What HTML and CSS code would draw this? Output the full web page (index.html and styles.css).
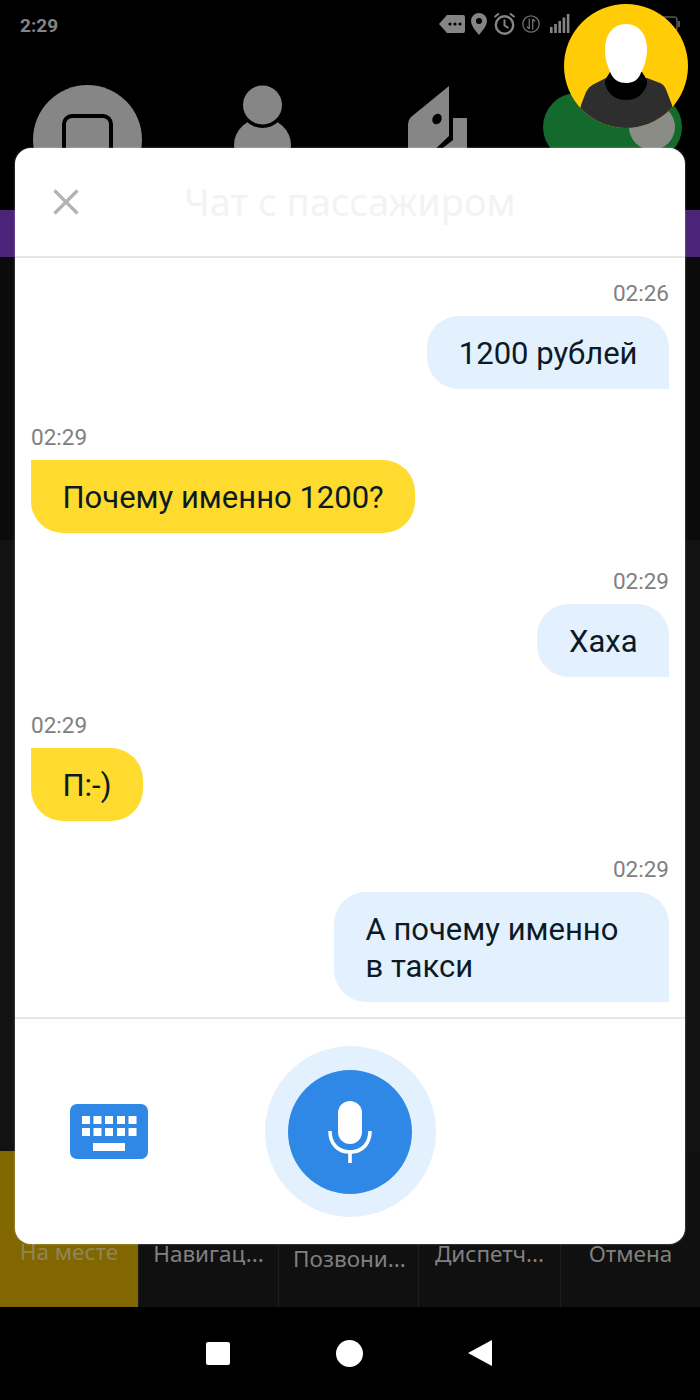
FILE: index.html
```html
<!DOCTYPE html>
<html lang="ru">
<head>
  <meta charset="UTF-8" />
  <meta name="viewport" content="width=device-width, initial-scale=1.0"/>
  <title>Чат с пассажиром</title>
  <link rel="stylesheet" href="styles.css">
</head>
<body>
  <div class="screen">
    <div class="status">
      <span class="clock">2:29</span>
      <div class="status-icons">
        <svg width="26" height="18" viewBox="0 0 26 18"><path d="M8 0H24a2 2 0 0 1 2 2V16a2 2 0 0 1-2 2H8L0 9z" fill="#858585"/><circle cx="11" cy="9" r="1.6" fill="#000"/><circle cx="16" cy="9" r="1.6" fill="#000"/><circle cx="21" cy="9" r="1.6" fill="#000"/></svg>
        <svg width="16" height="22" viewBox="0 0 16 22"><path fill-rule="evenodd" d="M8 0a8 8 0 0 1 8 8c0 5-5 10-8 14C5 18 0 13 0 8a8 8 0 0 1 8-8zm0 5a3 3 0 1 0 0 6 3 3 0 0 0 0-6z" fill="#858585"/></svg>
        <svg width="23" height="23" viewBox="0 0 23 23" fill="none" stroke="#858585"><circle cx="11.5" cy="13" r="8.7" stroke-width="2.4"/><path d="M11.5 7.5V13.5L15.500 16" stroke-width="2"/><path d="M1.500 5L6 1.500M21.500 5L17 1.500" stroke-width="2"/></svg>
        <svg width="18" height="18" viewBox="0 0 18 18" fill="none" stroke="#6f6f6f" stroke-width="1.300"><circle cx="9" cy="9" r="8.200"/><path d="M7.300 3.500V14M7.300 14L5 11.500M10.700 14.500V4M10.700 4L13 6.500"/></svg>
        <svg class="signal" width="20" height="19" viewBox="0 0 20 19" fill="#858585"><rect x="0" y="13" width="2.600" height="6"/><rect x="4.200" y="10" width="2.600" height="9"/><rect x="8.400" y="7" width="2.600" height="12"/><rect x="12.600" y="3.500" width="2.600" height="15.500"/><rect x="16.800" y="0" width="2.600" height="19"/></svg>
        <svg class="battery" width="17" height="16" viewBox="0 0 17 16" fill="none" stroke="#555"><rect x="-8" y="1" width="22" height="14" rx="3" stroke-width="1.500"/><path d="M16 5V11" stroke-width="2"/></svg>
      </div>
    </div>

    <div class="actions">
      <svg width="109" height="109" viewBox="0 0 109 109">
        <circle cx="54.500" cy="54.500" r="54.500" fill="#868686"/>
        <rect x="31" y="31" width="47" height="60" rx="8" fill="none" stroke="#000" stroke-width="4"/>
      </svg>
      <svg width="57" height="70" viewBox="0 0 57 70">
        <ellipse cx="28.500" cy="60" rx="28.500" ry="27" fill="#868686"/>
        <circle cx="28.500" cy="20" r="23" fill="#000"/>
        <circle cx="28.500" cy="20" r="19.500" fill="#868686"/>
      </svg>
      <svg width="59" height="70" viewBox="0 0 59 70">
        <path d="M41 1L3 32Q0 35 0 39V70H21L41 51z" fill="#868686"/>
        <path d="M45 33H59V70H26L45 55z" fill="#868686"/>
        <ellipse cx="29" cy="34" rx="4.500" ry="5.500" transform="rotate(25 29 34)" fill="#000"/>
      </svg>
      <svg class="toggle" width="139" height="68" viewBox="0 0 139 68">
        <rect width="139" height="68" rx="34" fill="#146a2c"/>
        <circle cx="109" cy="34" r="23" fill="#8c8c86"/>
      </svg>
    </div>

    <div class="band"></div>
    <div class="dark dark-top"></div>
    <div class="dark dark-bottom"></div>

    <div class="tabs">
      <div class="tab tab-active">На месте</div>
      <div class="tab">Навигац...</div>
      <div class="tab tab-low">Позвони...</div>
      <div class="tab">Диспетч...</div>
      <div class="tab">Отмена</div>
    </div>

    <div class="navbar">
      <span class="nav-square"></span>
      <span class="nav-circle"></span>
      <span class="nav-back"></span>
    </div>

    <svg class="avatar" width="124" height="124" viewBox="0 0 124 124">
      <clipPath id="avatar-clip"><circle cx="62" cy="62" r="62"/></clipPath>
      <g clip-path="url(#avatar-clip)">
        <rect width="124" height="124" fill="#ffcc05"/>
        <path d="M12 124L17 101L22 88Q25 82 32 79L42 74H83L96 79Q101 81 103 88L108 101L112 124z" fill="#2e2e2e"/>
        <path d="M41 76L46 68H78L83 76V80Q78 96 62 96Q46 96 41 80z" fill="#000"/>
        <path d="M62 20C76 20 84 32 83 48C82 60 78 66 76 71C73 77 68 79 62 79C55 79 50 76 47 70C45 64 41 58 41 46C41 32 48 20 62 20z" fill="#fff"/>
      </g>
    </svg>

    <div class="modal">
      <div class="modal-head">
        <svg class="close" width="26" height="26" viewBox="0 0 26 26"><path d="M1.500 1.500L24.500 24.500M24.500 1.500L1.500 24.500" stroke="#b3b3b3" stroke-width="3.200" fill="none"/></svg>
        <h1>Чат с пассажиром</h1>
      </div>

      <div class="messages">
        <div class="msg msg-out">
          <div class="time">02:26</div>
          <div class="bubble">1200 рублей</div>
        </div>
        <div class="msg msg-in">
          <div class="time">02:29</div>
          <div class="bubble">Почему именно 1200?</div>
        </div>
        <div class="msg msg-out">
          <div class="time">02:29</div>
          <div class="bubble">Хаха</div>
        </div>
        <div class="msg msg-in">
          <div class="time">02:29</div>
          <div class="bubble">П:-)</div>
        </div>
        <div class="msg msg-out">
          <div class="time">02:29</div>
          <div class="bubble bubble-wide">А почему именно<br>в такси</div>
        </div>
      </div>

      <div class="modal-foot">
        <svg class="keyboard" width="78" height="55" viewBox="0 0 78 55">
          <rect width="78" height="55" rx="7" fill="#2f88e6"/>
          <g fill="#fff">
            <rect x="12" y="12" width="8" height="8"/><rect x="23.500" y="12" width="8" height="8"/><rect x="35" y="12" width="8" height="8"/><rect x="47" y="12" width="8" height="8"/><rect x="58.500" y="12" width="8" height="8"/>
            <rect x="12" y="24" width="8" height="8"/><rect x="23.500" y="24" width="8" height="8"/><rect x="35" y="24" width="8" height="8"/><rect x="47" y="24" width="8" height="8"/><rect x="58.500" y="24" width="8" height="8"/>
            <rect x="23" y="39" width="32" height="8"/>
          </g>
        </svg>
        <div class="mic-ring">
          <div class="mic">
            <svg width="44" height="64" viewBox="0 0 44 64" fill="none">
              <rect x="10" y="1" width="24" height="43" rx="12" fill="#fff"/>
              <path d="M2 31C2 44 10 52 22 52C34 52 42 44 42 31" stroke="#fff" stroke-width="3.600"/>
              <path d="M22 52V63" stroke="#fff" stroke-width="3.600"/>
            </svg>
          </div>
        </div>
      </div>
    </div>
  </div>
</body>
</html>
```

FILE: styles.css
```css
html, body {
  margin: 0;
  padding: 0;
  background: #000;
}
.screen {
  position: relative;
  width: 700px;
  height: 1400px;
  overflow: hidden;
  display: flex;
  flex-direction: column;
  background: #000;
  font-family: "Roboto", sans-serif;
}

/* status bar */
.status {
  height: 48px;
  flex: none;
  display: flex;
  align-items: center;
  justify-content: space-between;
  padding: 0 20px;
  box-sizing: border-box;
}
.clock {
  font-size: 19px;
  font-weight: 700;
  color: #858585;
  margin-top: 2px;
}
.status-icons {
  display: flex;
  align-items: center;
  gap: 6px;
  margin-top: -1px;
}
.signal { margin-left: 4px; }
.battery { margin-left: 87px; }

/* what is behind the dialog */
.actions {
  height: 162px;
  flex: none;
  display: grid;
  grid-template-columns: repeat(4, 175px);
  justify-items: center;
  align-items: start;
  padding-top: 37px;
  box-sizing: border-box;
  overflow: hidden;
}
.toggle { margin-top: 8px; }
.band {
  height: 47px;
  flex: none;
  background: #4b2378;
}
.dark { flex: none; }
.dark-top {
  height: 283px;
  background: #0b0b0b;
}
.dark-bottom {
  height: 611px;
  background: #121212;
}
.tabs {
  height: 156px;
  flex: none;
  display: grid;
  grid-template-columns: 138px 140px 140px 142px 140px;
  background: #101010;
  font-family: "Noto Sans", sans-serif;
  font-size: 22.500px;
  color: #808080;
}
.tab {
  padding-top: 87px;
  text-align: center;
  border-left: 1px solid #1e1e1e;
  white-space: nowrap;
}
.tab-low { padding: 92px 0 0 2px; }
.tab-active {
  background: #826700;
  color: #8f8658;
  border-left: 0;
  padding-top: 85px;
}
.navbar {
  flex: 1;
  display: flex;
  align-items: center;
  justify-content: center;
  gap: 106px;
  padding: 0 2px 1px 0;
}
.nav-square {
  width: 24px;
  height: 23px;
  background: #fff;
  border-radius: 2px;
}
.nav-circle {
  width: 27px;
  height: 27px;
  background: #fff;
  border-radius: 50%;
}
.nav-back {
  width: 0;
  height: 0;
  margin-left: -1px;
  border-top: 13.5px solid transparent;
  border-bottom: 13.5px solid transparent;
  border-right: 24px solid #fff;
}

.avatar {
  position: absolute;
  top: 4px;
  left: 564px;
  z-index: 2;
}

/* chat dialog */
.modal {
  position: absolute;
  top: 148px;
  left: 15px;
  width: 670px;
  height: 1096px;
  display: flex;
  flex-direction: column;
  background: #fff;
  border-radius: 16px;
  box-shadow: 0 0 2px rgba(255,255,255,0.5);
}
.modal-head {
  height: 110px;
  flex: none;
  display: flex;
  align-items: center;
  justify-content: center;
  position: relative;
  border-bottom: 2px solid #e6e6e6;
  box-sizing: border-box;
}
.close {
  position: absolute;
  left: 38px;
  top: 41px;
}
.modal-head h1 {
  margin: 0 0 2px;
  font-family: "Noto Sans", sans-serif;
  font-size: 38px;
  font-weight: 400;
  color: #f3f3f3;
}
.messages {
  flex: 1;
  display: flex;
  flex-direction: column;
  gap: 35px;
  padding: 22px 16px 15px;
}
.msg {
  display: flex;
  flex-direction: column;
}
.msg-out { align-items: flex-end; }
.msg-in { align-items: flex-start; }
.time {
  height: 26px;
  line-height: 26px;
  margin-bottom: 10px;
  font-size: 22.500px;
  color: #808080;
}
.bubble {
  padding: 20.250px 31.500px 16.250px;
  font-size: 31px;
  line-height: 36.500px;
  color: #0c1a26;
}
.msg-out .bubble {
  background: #e3f0fd;
  border-radius: 32px 32px 0 32px;
}
.msg-in .bubble {
  background: #fedb2e;
  border-radius: 0 32px 32px 32px;
}
.bubble-wide { width: 272px; }
.modal-foot {
  height: 227px;
  flex: none;
  display: grid;
  grid-template-columns: 1fr auto 1fr;
  align-items: center;
  border-top: 2px solid #e6e6e6;
  box-sizing: border-box;
}
.keyboard { margin-left: 55px; }
.mic-ring {
  width: 171px;
  height: 171px;
  display: flex;
  align-items: center;
  justify-content: center;
  border-radius: 50%;
  background: #e3f0fd;
}
.mic {
  width: 124px;
  height: 124px;
  display: flex;
  align-items: center;
  justify-content: center;
  border-radius: 50%;
  background: #2f88e6;
}
```
